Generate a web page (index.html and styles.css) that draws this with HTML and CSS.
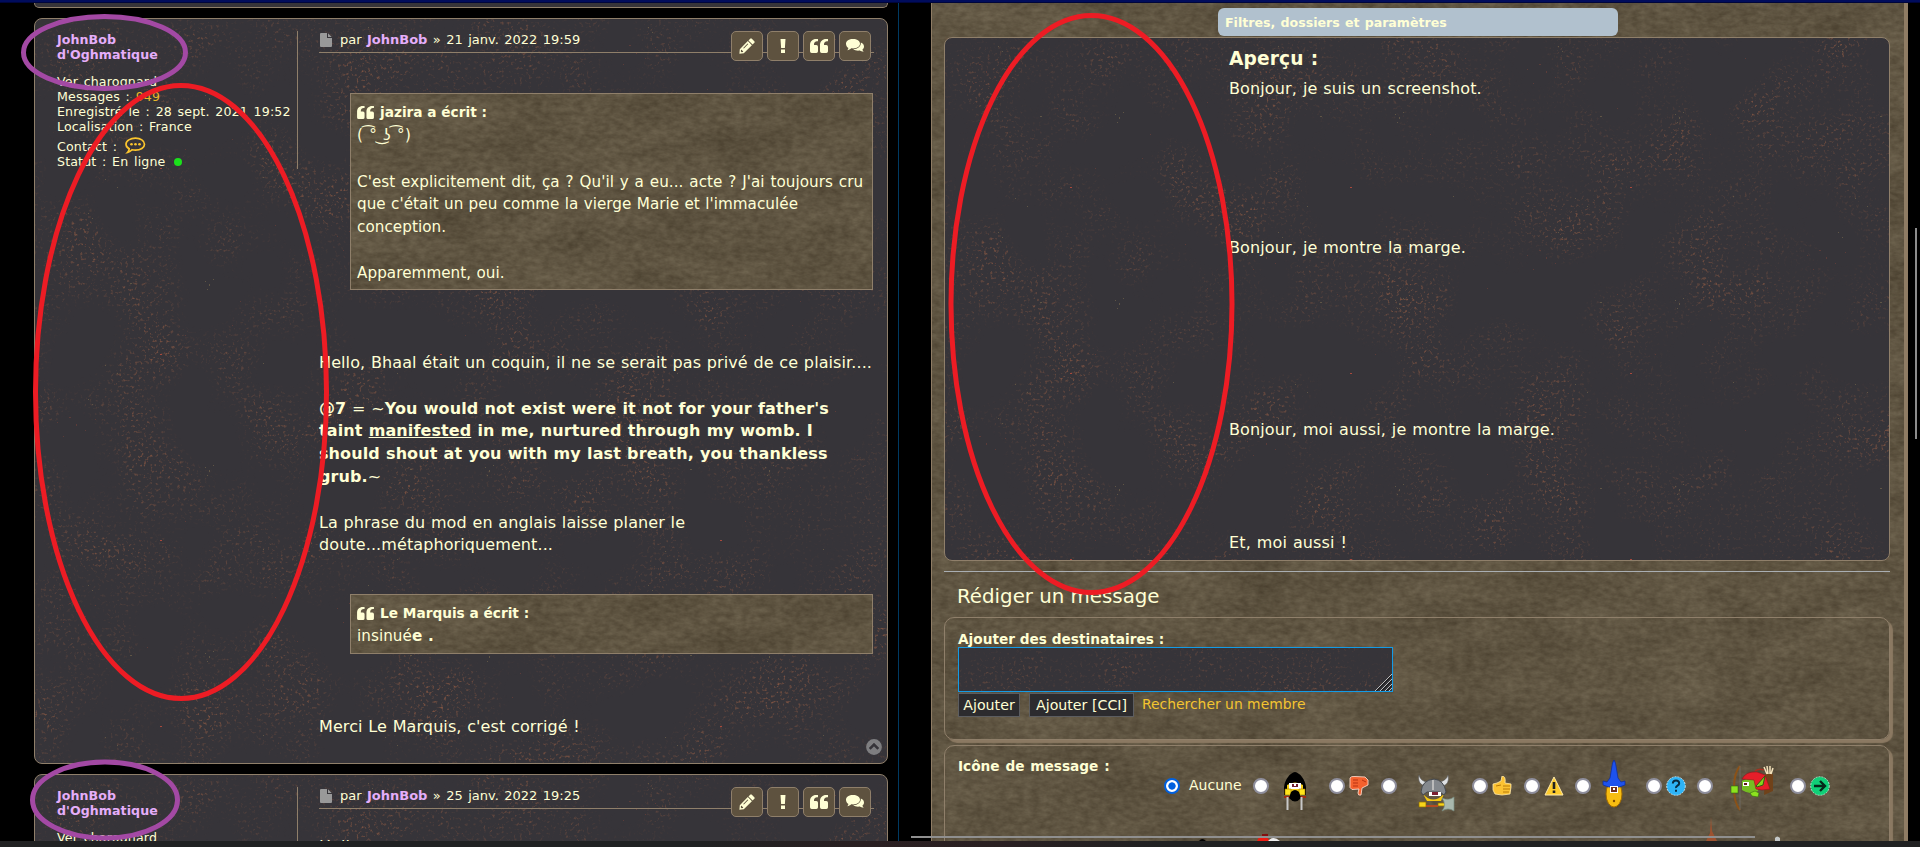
FILE: index.html
```html
<!DOCTYPE html>
<html lang="fr">
<head>
<meta charset="utf-8">
<title>Forum</title>
<link rel="stylesheet" href="styles.css">
</head>
<body>
<svg class="defs" width="0" height="0" aria-hidden="true">
  <defs>
    <filter id="rock" x="0" y="0" width="100%" height="100%" color-interpolation-filters="sRGB">
      <feTurbulence type="fractalNoise" baseFrequency="0.014 0.03" numOctaves="6" seed="8" result="n"/>
      <feColorMatrix in="n" type="matrix" values="0.14 0 0 0 0.307  0.135 0 0 0 0.262  0.12 0 0 0 0.195  0 0 0 0 1" result="base"/>
      <feTurbulence type="fractalNoise" baseFrequency="0.12 0.22" numOctaves="3" seed="3" result="g"/>
      <feColorMatrix in="g" type="matrix" values="0.5 0 0 0 0.1  0.5 0 0 0 0.08  0.45 0 0 0 0.03  0 0 0 0 0.25" result="grain"/>
      <feMerge><feMergeNode in="base"/><feMergeNode in="grain"/></feMerge>
    </filter>
    <filter id="dust" x="0" y="0" width="100%" height="100%" color-interpolation-filters="sRGB">
      <feTurbulence type="fractalNoise" baseFrequency="0.33" numOctaves="2" seed="5" result="f"/>
      <feColorMatrix in="f" type="matrix" values="0 0 0 0 0.5  0 0 0 0 0.33  0 0 0 0 0.26  4 0 0 0 -2.3" result="dots"/>
      <feTurbulence type="fractalNoise" baseFrequency="0.014" numOctaves="2" seed="11" result="m"/>
      <feColorMatrix in="m" type="matrix" values="0 0 0 0 0  0 0 0 0 0  0 0 0 0 0  0 2.6 0 0 -1.05" result="mask"/>
      <feComposite in="dots" in2="mask" operator="in"/>
    </filter>
    <pattern id="specks" width="280" height="186" patternUnits="userSpaceOnUse">
      <g fill="#6b4038" opacity=".7">
        <rect x="22" y="31" width="1" height="1"/><rect x="34" y="26" width="2" height="1"/><rect x="41" y="33" width="1" height="2"/><rect x="28" y="45" width="1" height="1"/><rect x="50" y="39" width="1" height="1"/><rect x="60" y="28" width="1" height="1"/><rect x="112" y="70" width="1" height="1"/><rect x="150" y="130" width="1" height="1"/><rect x="205" y="96" width="1" height="1"/><rect x="197" y="120" width="1" height="1"/><rect x="240" y="20" width="1" height="1"/><rect x="262" y="64" width="1" height="1"/>
      </g>
      <g fill="#70644a" opacity=".7">
        <rect x="53" y="8" width="1" height="1"/><rect x="57" y="13" width="1" height="1"/><rect x="95" y="78" width="2" height="1"/><rect x="170" y="76" width="1" height="1"/><rect x="174" y="79" width="1" height="2"/><rect x="178" y="74" width="1" height="1"/><rect x="172" y="84" width="1" height="1"/><rect x="228" y="158" width="1" height="1"/><rect x="70" y="160" width="1" height="1"/><rect x="82" y="168" width="1" height="1"/>
      </g>
      <rect x="125" y="149" width="2" height="1" fill="#a8493c"/>
    </pattern>
    <symbol id="pencil" viewBox="0 0 16 16"><path fill="#ffffd5" fill-rule="evenodd" d="M11.2.7q.8-.8 1.6 0l2.5 2.5q.8.8 0 1.6l-1.7 1.7L9.500 2.400zM8.800 3.100l4.100 4.100-8.100 8.100L.4 15.700l.4-4.500zM2 12.100l-.2 1.300.9.9 1.200-.2.300-1.100-1-.2-.2-1zM4.200 9.900l.7.600 4.400-4.400-.7-.6z"/></symbol>
    <symbol id="bang" viewBox="0 0 16 16"><path fill="#ffffd5" d="M5.500 1h5l-.6 9H6.100zM6 11.500h4V15H6z"/></symbol>
    <symbol id="quote" viewBox="0 0 18 16"><path fill="#ffffd5" d="M8 1v2.200H7C5.200 3.200 4 4.500 4 6.300V7h2.300Q8 7 8 8.700v4.600Q8 15 6.300 15H1.700Q0 15 0 13.300V7c0-3.600 2.600-6 6-6zM18 1v2.200h-1c-1.800 0-3 1.300-3 3.100V7h2.300Q18 7 18 8.700v4.600q0 1.700-1.700 1.700h-4.600Q10 15 10 13.300V7c0-3.600 2.600-6 6-6z"/></symbol>
    <symbol id="chat" viewBox="0 0 18 16"><path fill="#ffffd5" d="M14.800 4.500C16.800 5.300 18 6.700 18 8.400c0 1.200-.6 2.300-1.600 3.100.2 1 .7 1.600 1.300 2.300-1.700 0-2.800-.5-3.800-1.200-2.500.4-5.100 0-6.700-1.500 4.600 0 8-2.600 7.600-6.600z"/><path fill="#ffffd5" d="M7 1c3.900 0 7 2 7 4.700s-3.100 4.700-7 4.700c-.6 0-1.100 0-1.700-.1C4.100 11.400 2.800 12 1.300 12.200c.5-.7 1-1.300 1.100-2.300C.9 9 0 7.400 0 5.700 0 3 3.100 1 7 1z"/></symbol>
    <symbol id="page" viewBox="0 0 12 14"><path fill="#999" d="M1 0h6v5h5v8q0 1-1 1H1q-1 0-1-1V1q0-1 1-1zM8 .3L11.700 4H8z"/></symbol>
  </defs>
</svg>

<div class="topline"></div>
<div class="screen">
  <main class="topic">
    <section class="post post-prev"><svg class="texture"><rect width="100%" height="100%" fill="url(#specks)"/></svg></section>

    <section class="post post-main">
      <svg class="texture"><rect width="100%" height="100%" filter="url(#dust)"/><rect width="100%" height="100%" fill="url(#specks)"/></svg>
      <aside class="profile">
        <b class="nick">JohnBob<br>d'Oghmatique</b>
        <p>Ver charognard</p>
        <p>Messages : <a>949</a></p>
        <p>Enregistré le : 28 sept. 2021 19:52</p>
        <p>Localisation : France</p>
        <p class="contact">Contact :
          <svg width="21" height="18" viewBox="0 0 21 18"><path fill="none" stroke="#fbc52d" stroke-width="1.700" d="M10.500 1.200c5 0 9 2.500 9 6s-4 6-9 6q-2 0-3.500-.4-1.700 2-4.300 2.600 1.500-1.600 1.500-3.600C2.200 10.600 1 9 1 7.200c0-3.500 4.300-6 9.500-6z"/><circle cx="6.500" cy="7.200" r="1.300" fill="#fbc52d"/><circle cx="10.500" cy="7.200" r="1.300" fill="#fbc52d"/><circle cx="14.500" cy="7.200" r="1.300" fill="#fbc52d"/></svg>
        </p>
        <p>Statut : En ligne <i class="online"></i></p>
      </aside>
      <article class="body">
        <header class="head">
          <svg width="12" height="14"><use href="#page"/></svg>
          <span class="by">par <b>JohnBob</b> » 21 janv. 2022 19:59</span>
          <nav class="tools">
            <a><svg width="16" height="16"><use href="#pencil"/></svg></a>
            <a><svg width="16" height="16"><use href="#bang"/></svg></a>
            <a><svg width="18" height="16"><use href="#quote"/></svg></a>
            <a><svg width="18" height="16"><use href="#chat"/></svg></a>
          </nav>
        </header>
        <blockquote class="quote-long">
          <svg class="texture"><rect width="100%" height="100%" filter="url(#rock)"/></svg>
          <cite><svg width="17" height="15"><use href="#quote"/></svg>jazira a écrit :</cite>
          <div class="face">( ͡° ͜ʖ ͡°)</div>
          <div><br><span class="q1">C'est explicitement dit, ça ? Qu'il y a eu... acte ? J'ai toujours cru</span><br>que c'était un peu comme la vierge Marie et l'immaculée<br>conception.<br><br>Apparemment, oui.</div>
        </blockquote>
        <div class="text text-hello">Hello, Bhaal était un coquin, il ne se serait pas privé de ce plaisir....<br><br><b>@7</b> = ~<b>You would not exist were it not for your father's<br>taint <u>manifested</u> in me, nurtured through my womb. I<br>should shout at you with my last breath, you thankless<br>grub.</b>~<br><br>La phrase du mod en anglais laisse planer le<br>doute...métaphoriquement...</div>
        <blockquote class="quote-short">
          <svg class="texture"><rect width="100%" height="100%" filter="url(#rock)"/></svg>
          <cite><svg width="17" height="15"><use href="#quote"/></svg>Le Marquis a écrit :</cite>
          <div>insinué<b>e .</b></div>
        </blockquote>
        <div class="text text-thanks">Merci Le Marquis, c'est corrigé !</div>
      </article>
      <svg class="to-top" width="16" height="16" viewBox="0 0 16 16"><circle cx="8" cy="8" r="7.900" fill="#7e7e80"/><path d="M3.700 9.800L8 5.500l4.300 4.300" fill="none" stroke="#363439" stroke-width="2.600"/></svg>
    </section>

    <section class="post post-next">
      <svg class="texture"><rect width="100%" height="100%" filter="url(#dust)"/><rect width="100%" height="100%" fill="url(#specks)"/></svg>
      <aside class="profile">
        <b class="nick">JohnBob<br>d'Oghmatique</b>
        <p>Ver charognard</p>
      </aside>
      <article class="body">
        <header class="head">
          <svg width="12" height="14"><use href="#page"/></svg>
          <span class="by">par <b>JohnBob</b> » 25 janv. 2022 19:25</span>
          <nav class="tools">
            <a><svg width="16" height="16"><use href="#pencil"/></svg></a>
            <a><svg width="16" height="16"><use href="#bang"/></svg></a>
            <a><svg width="18" height="16"><use href="#quote"/></svg></a>
            <a><svg width="18" height="16"><use href="#chat"/></svg></a>
          </nav>
        </header>
        <div class="text text-next">Hello</div>
      </article>
    </section>
  </main>

  <div class="compose">
    <div class="panel">
      <svg class="texture"><rect width="100%" height="100%" filter="url(#rock)"/></svg>
      <div class="pill">Filtres, dossiers et paramètres</div>
      <section class="preview">
        <svg class="texture"><rect width="100%" height="100%" filter="url(#dust)"/><rect width="100%" height="100%" fill="url(#specks)"/></svg>
        <h3>Aperçu :</h3>
        <p class="p1">Bonjour, je suis un screenshot.</p>
        <p class="p2">Bonjour, je montre la marge.</p>
        <p class="p3">Bonjour, moi aussi, je montre la marge.</p>
        <p class="p4">Et, moi aussi !</p>
      </section>
      <hr>
      <h2>Rédiger un message</h2>
      <fieldset class="recipients">
        <label>Ajouter des destinataires :</label>
        <div class="area"><svg class="texture"><rect width="100%" height="100%" filter="url(#dust)"/></svg><svg width="17" height="17" viewBox="0 0 17 17"><path d="M0 17L17 0M5 17L17 5M10 17l7-7M14 17l3-3" stroke="#bbb" stroke-width="1" fill="none"/><path d="M1.500 17L17 1.500M6.500 17L17 6.500M11.500 17l5.500-5.500" stroke="#111" fill="none"/></svg></div>
        <div class="actions"><button class="b1">Ajouter</button><button class="b2">Ajouter [CCI]</button><a>Rechercher un membre</a></div>
      </fieldset>
      <fieldset class="icons">
        <label>Icône de message :</label>
        <div class="options">
          <span class="opt o-none"><i class="radio on"></i><span class="none-text">Aucune</span></span>
          <span class="opt o-hood"><i class="radio"></i><svg width="24" height="39" viewBox="0 0 24 39"><path d="M12 0C7 1 2 7 1 15v8h22v-8C22 7 17 1 12 0z" fill="#000"/><path d="M4 13q8-5 16 0v9q-8 6-16 0z" fill="#f5cf16"/><path d="M6 11h12v6H6z" fill="#fff"/><path d="M9 12h2v2h2v-2h2v3H9z" fill="#702030"/><path d="M1 25h22" stroke="#a32b12" stroke-width="2"/><path d="M2 17h6v6H2zM16 17h6v6h-6z" fill="#ffe51c" stroke="#9c7200" stroke-width=".6"/><path d="M8 20q4-4 8 0l2 6q-6 7-12 0z" fill="#000"/><path d="M4.500 25v13M18.500 25v13" stroke="#c8c8c8" stroke-width="2"/></svg></span>
          <span class="opt o-small o-down"><i class="radio"></i><svg width="20" height="20" viewBox="0 0 20 20"><path d="M1 2q1-2 5-1.500L16 1l3 3v5l-4 2-2 1-1 7q-3 1-3-2l1-4-7 .5-2-2z" fill="#f4612e" stroke="#f8d4c4" stroke-width=".9"/><path d="M4 4h5M4 7h5M4 10h5M13 4l4 2" stroke="#b83312" fill="none"/></svg></span>
          <span class="opt o-viking"><i class="radio"></i><svg width="38" height="38" viewBox="0 0 38 38"><path d="M1 0q-2 9 6 11l3-4Q3 7 1 0zM30 0q2 9-5 11l-4-4q7-1 9-7z" fill="#dfe1e3" stroke="#555" stroke-width=".6"/><path d="M5 19Q15 30 26 19l-3 7H9z" fill="#f3c713"/><path d="M3 17Q4 5 16 4q10 1 12 13l-2 3-4-3H9l-4 3z" fill="#84888d" stroke="#45494e"/><path d="M15 5v10" stroke="#bbb" stroke-width="2"/><path d="M11 17h12v4H11z" fill="#fff"/><path d="M14 17h6v3h-6z" fill="#7b1f31"/><path d="M1 27h7v5H1zM20 28h8v3h-8z" fill="#f7d51b" stroke="#8e6a00" stroke-width=".7"/><path d="M8 31h12" stroke="#b34b20" stroke-width="2"/><path d="M24 23q7 3 12-1v14q-6-4-12 0 5-6 0-13z" fill="#a9b8ad" stroke="#778a80" stroke-width=".7"/></svg></span>
          <span class="opt o-small o-up"><i class="radio"></i><svg width="20" height="20" viewBox="0 0 20 20"><path d="M1 8l4-1 4-2 1-5q4 0 3 7l6 1v3l-1 7-8 1-7-1-2-4z" fill="#fbc232" stroke="#ffe9a9" stroke-width=".8"/><path d="M11 10h7M11 13h7M11 16h6M4 10l5-1" stroke="#b87a08" fill="none"/></svg></span>
          <span class="opt o-small o-warn"><i class="radio"></i><svg width="20" height="20" viewBox="0 0 20 20"><path d="M10 1l9 18H1z" fill="#fdcb2c" stroke="#ffe9a9" stroke-width="1" stroke-linejoin="round"/><path d="M8.700 6h2.600v7H8.700zM8.700 14.500h2.600V17H8.700z" fill="#222"/></svg></span>
          <span class="opt o-wizard"><i class="radio"></i><svg width="24" height="48" viewBox="0 0 24 48"><ellipse cx="12" cy="34" rx="8" ry="13" fill="#f7bd11" stroke="#a36c00"/><path d="M12 0l1.500 3L16 18l3 4 4-1v4q-11 5-22 0v-4l4 1 3-4L10.500 3z" fill="#1d52ed" stroke="#0a2a9d" stroke-width=".7"/><path d="M8 26h8v7H8z" fill="#fff"/><path d="M9 27h6v5H9z" fill="#71301d"/><path d="M11 28h2v2h-2z" fill="#fff"/><circle cx="12" cy="41" r="1.200" fill="#7c4a00"/></svg></span>
          <span class="opt o-small o-help"><i class="radio"></i><svg width="20" height="20" viewBox="0 0 20 20"><circle cx="10" cy="10" r="9.300" fill="#2eb4f7" stroke="#d3f1ff" stroke-width=".8" stroke-dasharray="2 1"/><path d="M6.800 7.500q.2-3 3.200-3t3.200 2.700q0 1.500-1.700 2.500T10 12" fill="none" stroke="#082c42" stroke-width="2"/><path d="M9 13.700h2v2H9z" fill="#082c42"/></svg></span>
          <span class="opt o-goblin"><i class="radio"></i><svg width="44" height="47" viewBox="0 0 44 47"><path d="M35 9h8v17l-9 4z" fill="#70421a"/><path d="M34 2l3 7M37 1l1 8M40 1v8M43 3l-2 6" stroke="#f4e2bb" stroke-width="1.500"/><path d="M25 6q4-3 9-1" stroke="#a33322" stroke-width="1.500" fill="none"/><path d="M10 1Q4 8 4 23t6 22" fill="none" stroke="#8b5218" stroke-width="2"/><path d="M10 1v44" stroke="#777" stroke-width=".6"/><path d="M12 16q7-5 17-1l-1 11q-7 5-16-1z" fill="#75bd22"/><path d="M12 14Q16 6 27 7l8 3 5 14q-9 2-14 0l-2-9z" fill="#e61e29" stroke="#951319" stroke-width=".6"/><path d="M26 21l9-10-2 9-6 2z" fill="#83d51e" stroke="#315e0f"/><path d="M13 17h6v4h-6z" fill="#fff"/><path d="M14 18h3v2h-3z" fill="#601a1a"/><path d="M1 21h7v7H1zM20 28l5-2 4 2-1 4-6-1z" fill="#8ce21f" stroke="#346c10" stroke-width=".6"/></svg></span>
          <span class="opt o-small o-arrow"><i class="radio"></i><svg width="20" height="20" viewBox="0 0 20 20"><circle cx="10" cy="10" r="9.300" fill="#10cf77" stroke="#b9f5d8" stroke-width=".8" stroke-dasharray="2 1"/><path d="M4 10h11M10 5l5 5-5 5" fill="none" stroke="#06291a" stroke-width="2.400"/></svg></span>
        </div>
        <svg class="row-two" width="600" height="30" viewBox="1190 811 600 30"><path d="M1199 841q3-4 7 0z" fill="#000"/><path d="M1257 841q3-7 9-5l4 5z" fill="#ed1c12"/><path d="M1262 834h6v3h-6z" fill="#821010"/><path d="M1268 841q5-6 12 0z" fill="#eee"/><path d="M1711 817l1 14 5 10h-11l4-8z" fill="#9c5230"/><path d="M1775 841v-3q2-3 5 0v3z" fill="#c4c8c8"/></svg>
      </fieldset>
    </div>
  </div>
</div>
<div class="taskbar"></div>

<div class="scroll-v"></div>
<div class="scroll-h"></div>
<svg class="marks" width="1920" height="847" fill="none" stroke-width="5">
  <g stroke="#ed1c24"><ellipse cx="181" cy="392" rx="145.500" ry="306.500"/><ellipse cx="1091.500" cy="304" rx="140.500" ry="288.500"/></g>
  <g stroke="#a349a4"><ellipse cx="104.500" cy="52.500" rx="81" ry="36"/><ellipse cx="105" cy="800" rx="72.500" ry="38"/></g>
</svg>
</body>
</html>
```

FILE: styles.css
```css
* { box-sizing: border-box; }
body {
  margin: 0;
  width: 1920px;
  height: 847px;
  overflow: hidden;
  background: #000;
  color: #ffffd5;
  font-family: "DejaVu Sans", Verdana, sans-serif;
  font-size: 12.6px;
  position: relative;
}
p, h2, h3, blockquote, fieldset { margin: 0; padding: 0; min-width: 0; }
.defs { position: absolute; }
.topline { height: 3px; background: #000c5c; border-bottom: 1px solid #00053a; }
.screen { display: flex; height: 838px; overflow: hidden; }
.taskbar { height: 6px; background: linear-gradient(90deg, #202122 0, #202122 700px, #291f21 860px, #2a2022 1000px, #202122 1160px); }

.texture { position: absolute; inset: 0; width: 100%; height: 100%; z-index: -1; }

/* topic column */
.topic { width: 899px; padding-left: 34px; border-right: 1px solid #003a63; }
.post {
  position: relative;
  z-index: 0;
  display: flex;
  width: 854px;
  background: #363439;
  border: 1px solid #8f7f6a;
  border-radius: 8px;
  overflow: hidden;
}
.post-prev { height: 5px; border-top: 0; border-radius: 0 0 8px 8px; }
.post-main { height: 746px; margin-top: 10px; }
.post-next { height: 90px; margin-top: 10px; }
.profile {
  width: 241px;
  height: 138px;
  margin: 12px 21px 0 22px;
  padding-top: 1px;
  border-right: 1px solid #8f7f6a;
  line-height: 15px;
  letter-spacing: 0.15px;
  word-spacing: 1.5px;
  white-space: nowrap;
}
.profile .nick { display: block; margin-bottom: 12px; color: #e5aefa; letter-spacing: 0.06px; }
.profile a { color: #e9b829; }
.contact { height: 20px; line-height: 25px; }
.contact svg { vertical-align: -4px; margin-left: 2px; }
.online { display: inline-block; width: 8px; height: 8px; border-radius: 50%; background: #1be01b; margin-left: 3px; }

.body { width: 555px; padding-top: 12px; white-space: nowrap; }
.head { display: flex; height: 22px; border-bottom: 1px solid #8f7f6a; line-height: 18px; font-size: 13px; }
.head > svg { margin: 2px 8px 0 1px; }
.head b { color: #e5aefa; }
.by { flex: 1; word-spacing: 1.3px; }
.tools { display: flex; gap: 4px; margin-right: 3px; }
.tools a {
  display: flex;
  align-items: center;
  justify-content: center;
  width: 32px;
  height: 30px;
  border: 1px solid #8f7f6a;
  border-radius: 5px;
  background: #5e523f;
}
blockquote {
  position: relative;
  z-index: 0;
  width: 523px;
  margin-left: 31px;
  padding: 7px 6px 0;
  border: 1px solid #8f7f6a;
  font-size: 15.2px;
  line-height: 22.8px;
  letter-spacing: 0.05px;
  word-spacing: 0.4px;
}
.quote-long { height: 197px; margin-top: 40px; }
.quote-short { height: 60px; margin-top: 37px; }
.face { height: 24px; line-height: 23.5px; letter-spacing: 0.5px; }
.q1 { word-spacing: 0.95px; }
cite { display: flex; align-items: center; gap: 6px; height: 22.8px; font-style: normal; font-weight: bold; font-size: 13.7px; letter-spacing: 0; word-spacing: 0; }
.text { font-size: 16px; line-height: 22.8px; letter-spacing: 0.1px; word-spacing: 0.5px; }
.text-hello { margin-top: 62px; }
.text-thanks { margin-top: 62px; }
.text-next { margin-top: 27px; }
.to-top { position: absolute; right: 5px; bottom: 8px; }

/* compose column */
.compose { flex: 1; padding-left: 32px; }
.panel {
  position: relative;
  z-index: 0;
  width: 977px;
  height: 838px;
  padding: 5px 14px 0 12px;
  border: solid #8f7c64;
  border-width: 0 4px 0 1px;
  background: #605440;
}
.pill {
  width: 400px;
  height: 28px;
  margin-left: 274px;
  padding-left: 7px;
  border-radius: 6px;
  background: #b1c1ce;
  font-size: 12.6px;
  font-weight: bold;
  line-height: 29px;
  word-spacing: 0.8px;
}
.preview {
  position: relative;
  z-index: 0;
  height: 524px;
  margin-top: 1px;
  padding: 10px 0 0 284px;
  border: 1px solid #8f7f6a;
  border-radius: 8px;
  background: #363439;
  font-size: 16px;
  line-height: 22px;
  letter-spacing: 0.13px;
  word-spacing: 0.7px;
  white-space: nowrap;
}
.preview h3 { font-size: 18.600px; }
.p1 { margin-top: 8px; }
.p2 { margin-top: 137px; }
.p3 { margin-top: 160px; }
.p4 { margin-top: 91px; }
hr { height: 1px; margin: 10px 0 0; border: 0; background: #a9aeb2; }
h2 { height: 45px; padding-left: 13px; font-size: 19.800px; font-weight: normal; line-height: 49px; }
fieldset {
  width: 946px;
  padding: 12px 0 0 13px;
  border: 1px solid #8f7f6a;
  border-radius: 10px;
  box-shadow: 3px 3px 1px #8b7962;
}
label { display: block; height: 17px; font-size: 13.700px; font-weight: bold; line-height: 19px; }
.recipients { height: 123px; }
.area { position: relative; z-index: 0; display: flex; justify-content: flex-end; align-items: flex-end; width: 435px; height: 45px; border: 1px solid #139be6; background: #363439; }
.actions { display: flex; font-size: 13.900px; line-height: 24px; }
.actions a { margin-left: 8px; color: #f4c430; white-space: nowrap; }
button {
  height: 24px;
  padding: 0;
  border: 1px solid #5c5d60;
  background: #2c2b2e;
  color: #ffffd5;
  font: 14.200px "DejaVu Sans", Verdana, sans-serif;
  white-space: nowrap;
}
.b1 { width: 62px; margin-top: 1px; }
.b2 { width: 105px; margin: 1px 0 0 9px; }

.icons { height: 130px; margin-top: 5px; border-radius: 10px 10px 0 0; padding-top: 12px; }
.icons label { line-height: 17px; word-spacing: 1px; }
.options { display: flex; align-items: center; height: 48px; margin: -13px 0 0 206px; }
.opt { display: flex; align-items: center; flex: none; height: 48px; font-size: 14px; }
.radio { flex: none; width: 16px; height: 16px; border: 2px solid #8f8f9d; border-radius: 50%; background: #fff; }
.radio.on { border-color: #0060df; background: radial-gradient(circle, #0060df 3.300px, #fff 4px); }
.o-none { width: 89px; gap: 9px; }
.none-text { padding-bottom: 3px; }
.o-hood { width: 76px; gap: 14px; }
.o-hood svg { margin-top: 10px; }
.o-small { width: 52px; gap: 4px; }
.o-viking { width: 91px; gap: 21px; }
.o-viking svg { margin-top: 15px; }
.o-warn { width: 51px; }
.o-wizard { width: 71px; gap: 11px; }
.o-wizard svg { margin-top: -4px; }
.o-help { width: 51px; }
.o-goblin { width: 93px; gap: 17px; }
.o-goblin svg { margin-top: 4px; }
.row-two { display: block; margin: 1px 0 0 232px; }

/* overlays */
.scroll-v { position: absolute; left: 1915px; top: 228px; width: 2px; height: 211px; background: #8c8c8c; }
.scroll-h { position: absolute; left: 911px; top: 836px; width: 844px; height: 2px; background: #8f8f8f; }
.marks { position: absolute; left: 0; top: 0; pointer-events: none; }
```
